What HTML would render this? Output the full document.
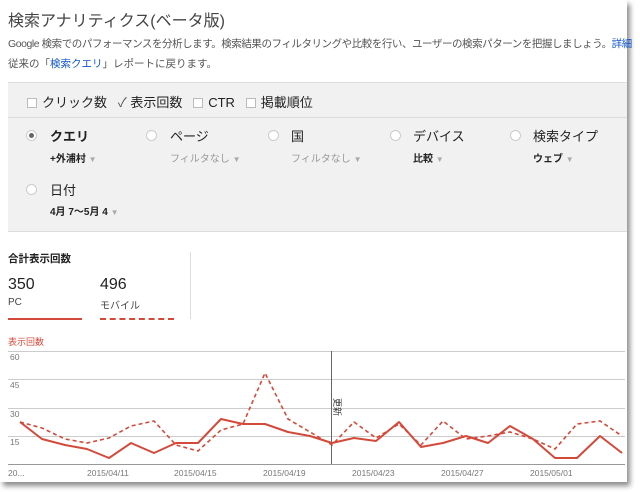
<!DOCTYPE html>
<html><head><meta charset="utf-8"><style>
*{margin:0;padding:0;box-sizing:border-box}
body{width:640px;height:492px;background:#fff;font-family:"Liberation Sans","Noto Sans CJK JP",sans-serif;color:#333;position:relative;overflow:hidden}
#pg{position:absolute;left:0;top:0;width:627px;height:482px;background:#fff;box-shadow:3px 4px 5px rgba(0,0,0,.45)}
.a{position:absolute;white-space:nowrap}
.box{position:absolute;left:8px;top:82px;width:619px;height:150px;background:#f1f1f1;border-top:1px solid #ddd;border-bottom:1px solid #ddd}
.cb{display:inline-block;width:10px;height:10px;border:1px solid #bbb;background:#fff;vertical-align:-1px;margin-right:5px}
.rd{position:absolute;width:11px;height:11px;border-radius:50%;border:1px solid #ccc;background:#fff}
.lab{font-size:13px;color:#222}
.sub{font-size:10px;font-weight:bold;color:#222}
.subg{font-size:10px;color:#999}
.ar{color:#aaa;font-size:8px}
</style></head><body><div id="pg">
<div class="a" style="left:8px;top:7px;font-size:16px;color:#444">検索アナリティクス(ベータ版)</div>
<div class="a" style="left:8px;top:36px;font-size:10.5px;color:#555;letter-spacing:-.45px">Google 検索でのパフォーマンスを分析します。検索結果のフィルタリングや比較を行い、ユーザーの検索パターンを把握しましょう。<span style="color:#15c">詳細</span></div>
<div class="a" style="left:8px;top:56px;font-size:10.5px;color:#555">従来の「<span style="color:#15c">検索クエリ</span>」レポートに戻ります。</div>
<div class="box">
<div style="position:absolute;left:0;right:0;top:34px;border-top:1px solid #ddd"></div>
<div class="a" style="left:19px;top:9px;font-size:13px;color:#222"><span class="cb"></span>クリック数&nbsp;&nbsp;&nbsp;<span style="color:#555">✓</span> 表示回数&nbsp;&nbsp;&nbsp;<span class="cb"></span>CTR&nbsp;&nbsp;&nbsp;<span class="cb"></span>掲載順位</div>
</div>
<div class="rd" style="left:26px;top:130px"><div style="width:5px;height:5px;border-radius:50%;background:#666;margin:2px"></div></div>
<div class="a lab" style="left:50px;top:126px;font-weight:bold">クエリ</div>
<div class="a sub" style="left:50px;top:150px">+外浦村 <span class="ar">▼</span></div>
<div class="rd" style="left:146px;top:130px"></div>
<div class="a lab" style="left:170px;top:126px">ページ</div>
<div class="a subg" style="left:170px;top:150px">フィルタなし <span class="ar">▼</span></div>
<div class="rd" style="left:268px;top:130px"></div>
<div class="a lab" style="left:291px;top:126px">国</div>
<div class="a subg" style="left:291px;top:150px">フィルタなし <span class="ar">▼</span></div>
<div class="rd" style="left:390px;top:130px"></div>
<div class="a lab" style="left:413px;top:126px">デバイス</div>
<div class="a sub" style="left:413px;top:150px">比較 <span class="ar">▼</span></div>
<div class="rd" style="left:510px;top:130px"></div>
<div class="a lab" style="left:533px;top:126px">検索タイプ</div>
<div class="a sub" style="left:533px;top:150px">ウェブ <span class="ar">▼</span></div>
<div class="rd" style="left:26px;top:184px"></div>
<div class="a lab" style="left:50px;top:180px">日付</div>
<div class="a sub" style="left:50px;top:203px">4月 7〜5月 4 <span class="ar">▼</span></div>

<div class="a" style="left:8px;top:251px;font-size:10.5px;font-weight:bold;color:#222">合計表示回数</div>
<div class="a" style="left:190px;top:252px;width:1px;height:67px;background:#ddd"></div>
<div class="a" style="left:8px;top:276px;font-size:16px;color:#222">350</div>
<div class="a" style="left:8px;top:297px;font-size:10px;color:#444">PC</div>
<div class="a" style="left:8px;top:318px;width:74px;border-top:2px solid #d44a3a"></div>
<div class="a" style="left:100px;top:276px;font-size:16px;color:#222">496</div>
<div class="a" style="left:100px;top:297px;font-size:10px;color:#444">モバイル</div>
<div class="a" style="left:100px;top:318px;width:74px;border-top:2px dashed #d44a3a"></div>
<div class="a" style="left:8px;top:335px;font-size:9px;color:#d44a3a">表示回数</div>
<svg class="a" style="left:0;top:345px" width="627" height="137" viewBox="0 345 627 137">
<g stroke="#ccc" stroke-width="1"><line x1="8" y1="351.5" x2="625" y2="351.5"/><line x1="8" y1="379.5" x2="625" y2="379.5"/><line x1="8" y1="408.5" x2="625" y2="408.5"/><line x1="8" y1="436.5" x2="625" y2="436.5"/></g>
<line x1="8" y1="464.5" x2="625" y2="464.5" stroke="#999"/>
<line x1="331.5" y1="351" x2="331.5" y2="464" stroke="#666"/>
<g font-size="8.5" fill="#777" font-family="Liberation Sans,sans-serif"><text x="10" y="360">60</text><text x="10" y="388">45</text><text x="10" y="417">30</text><text x="10" y="445">15</text>
<text x="8" y="476">20...</text><text x="87" y="476">2015/04/11</text><text x="174" y="476">2015/04/15</text><text x="263" y="476">2015/04/19</text><text x="352" y="476">2015/04/23</text><text x="441" y="476">2015/04/27</text><text x="530" y="476">2015/05/01</text></g>
<text x="0" y="0" font-size="9" fill="#333" transform="translate(334,398) rotate(90)" font-family="Liberation Sans,Noto Sans CJK JP,sans-serif">更新</text>
<polyline fill="none" stroke="#d44a3a" stroke-width="2" stroke-linejoin="round" points="20,422 42,439 65,445 87,449 109,458 131,443 154,453 176,443 198,443 221,419 243,424 265,424 288,432 310,436 332,443 354,438 376,441 399,422 421,447 443,443 466,436 488,443 510,426 533,439 555,458 577,458 600,436 622,453"/>
<polyline fill="none" stroke="#d44a3a" stroke-width="1.6" stroke-dasharray="4,3" points="20,422 42,428 65,439 87,443 109,438 131,426 154,421 176,445 198,451 221,430 243,424 265,373 288,419 310,432 332,445 354,422 376,438 399,424 421,445 443,421 466,439 488,436 510,432 533,439 555,449 577,424 600,421 622,436"/>
</svg>
</div></body></html>
